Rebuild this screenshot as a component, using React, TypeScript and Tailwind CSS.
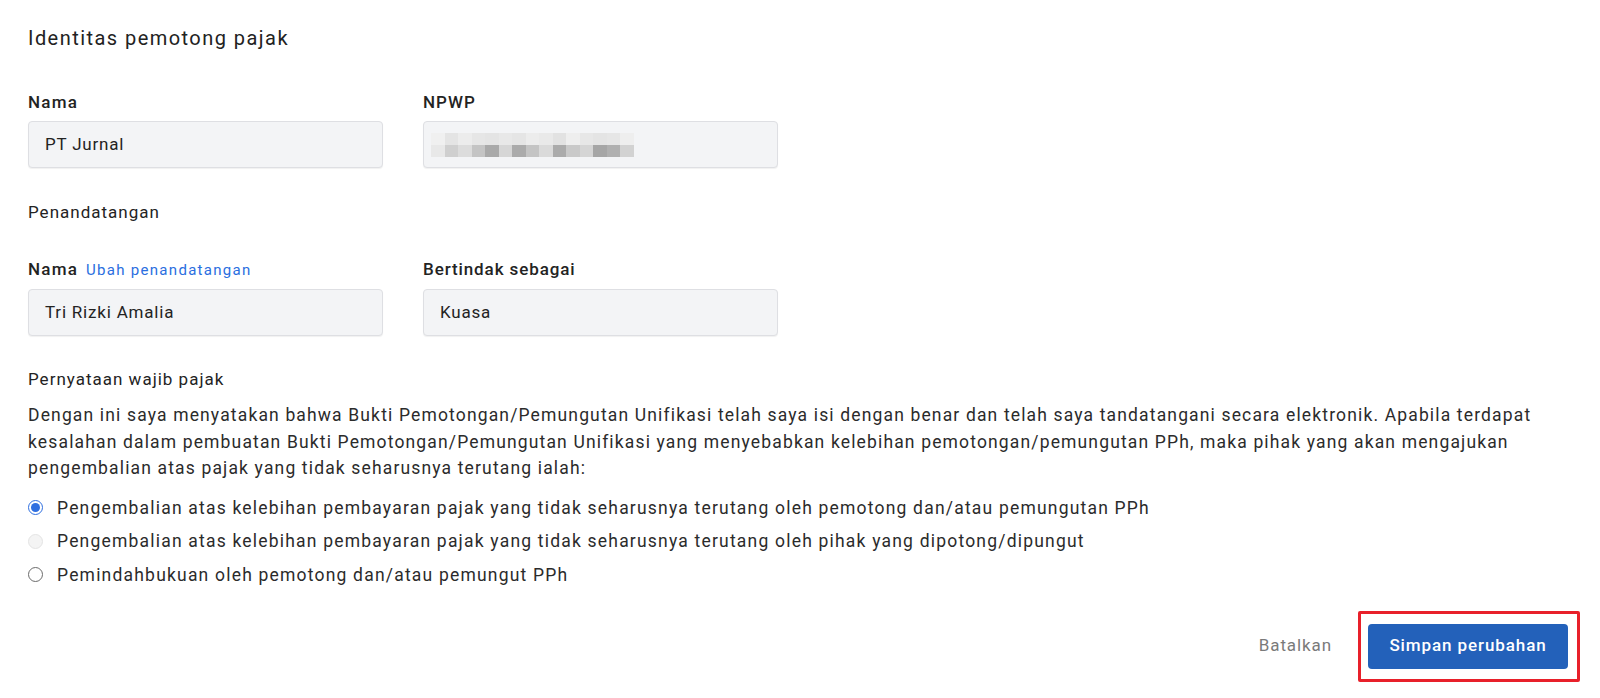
import React from "react";

function Radio({ state }: { state: "checked" | "disabled" | "off" }) {
  if (state === "checked")
    return (
      <span className="flex h-[15px] w-[15px] shrink-0 items-center justify-center rounded-full border-[1.5px] border-[#2f6fe0] bg-white">
        <span className="h-[9px] w-[9px] rounded-full bg-[#2f6fe0]" />
      </span>
    );
  if (state === "disabled")
    return <span className="h-[15px] w-[15px] shrink-0 rounded-full border border-[#e4e4e4] bg-[#f4f4f4]" />;
  return <span className="h-[15px] w-[15px] shrink-0 rounded-full border-[1.5px] border-[#6b6b6b] bg-white" />;
}

function Field({ children }: { children: React.ReactNode }) {
  return (
    <div className="flex h-[47px] w-[355px] items-center rounded-[4px] border border-[#dedfe3] bg-[#f3f4f6] px-[16px] text-[17px] tracking-[0.8px] text-[#232323] shadow-[0_1px_1px_rgba(0,0,0,0.06)]">
      {children}
    </div>
  );
}

function Blur() {
  const cells = [
    ["#f0f0f0", "#e8e8e8"],
    ["#e4e4e4", "#cfcfcf"],
    ["#ececec", "#dcdcdc"],
    ["#e6e6e6", "#c4c4c4"],
    ["#e4e4e4", "#a9a9a9"],
    ["#e8e8e8", "#d6d6d6"],
    ["#e5e5e5", "#ababab"],
    ["#ececec", "#c4c4c4"],
    ["#e9e9e9", "#dadada"],
    ["#e2e2e2", "#ababab"],
    ["#eeeeee", "#c9c9c9"],
    ["#e7e7e7", "#d5d5d5"],
    ["#e4e4e4", "#a6a6a6"],
    ["#e6e6e6", "#b0b0b0"],
    ["#eeeeee", "#d2d2d2"],
  ];
  return (
    <div className="-ml-[9px] flex">
      {cells.map((c, i) => (
        <div key={i} className="flex flex-col">
          <div className="h-[12px] w-[13.5px]" style={{ background: c[0] }} />
          <div className="h-[12px] w-[13.5px]" style={{ background: c[1] }} />
        </div>
      ))}
    </div>
  );
}

export default function App() {
  return (
    <div
      className="min-h-[698px] w-[1600px] bg-white text-[#232323]"
      style={{ fontFamily: "Roboto, 'Noto Sans', sans-serif" }}
    >
      <div className="px-[28px] pt-[26px]">
        <h1 className="text-[20px] font-normal leading-[24px] tracking-[1.45px] text-[#222]">Identitas pemotong pajak</h1>

        <div className="mt-[41px] flex gap-[40px]">
          <div className="flex flex-col">
            <div className="text-[17px] font-medium leading-[22px] tracking-[1.2px]">Nama</div>
            <div className="mt-[8px]">
              <Field>PT Jurnal</Field>
            </div>
          </div>
          <div className="flex flex-col">
            <div className="text-[17px] font-medium leading-[22px] tracking-[1px]">NPWP</div>
            <div className="mt-[8px]">
              <Field>
                <Blur />
              </Field>
            </div>
          </div>
        </div>

        <div className="mt-[33px] text-[17px] leading-[22px] tracking-[1px]">Penandatangan</div>

        <div className="mt-[35px] flex gap-[40px]">
          <div className="flex flex-col">
            <div className="flex h-[22px] items-baseline gap-[8px] leading-[22px]">
              <span className="text-[17px] font-medium tracking-[1.2px]">Nama</span>
              <span className="text-[15px] leading-[22px] tracking-[1.3px] text-[#2a6ee0]">Ubah penandatangan</span>
            </div>
            <div className="mt-[9px]">
              <Field>Tri Rizki Amalia</Field>
            </div>
          </div>
          <div className="flex flex-col">
            <div className="text-[17px] font-medium leading-[22px] tracking-[0.9px]">Bertindak sebagai</div>
            <div className="mt-[9px]">
              <Field>Kuasa</Field>
            </div>
          </div>
        </div>

        <div className="mt-[32px] text-[17px] leading-[22px] tracking-[1px]">Pernyataan wajib pajak</div>

        <p className="mt-[12px] max-w-[1552px] text-[17.5px] leading-[26.5px] tracking-[1.15px] text-[#2b2b2b]">
          Dengan ini saya menyatakan bahwa Bukti Pemotongan/Pemungutan Unifikasi telah saya isi dengan benar dan
          telah saya tandatangani secara elektronik. Apabila terdapat kesalahan dalam pembuatan Bukti
          Pemotongan/Pemungutan Unifikasi yang menyebabkan kelebihan pemotongan/pemungutan PPh, maka pihak yang akan
          mengajukan pengembalian atas pajak yang tidak seharusnya terutang ialah:
        </p>

        <div className="mt-[15px] flex flex-col gap-[11.5px] text-[17.5px] leading-[22px] tracking-[1.2px] text-[#2b2b2b]">
          <label className="flex items-center gap-[14px]">
            <Radio state="checked" />
            <span>Pengembalian atas kelebihan pembayaran pajak yang tidak seharusnya terutang oleh pemotong dan/atau pemungutan PPh</span>
          </label>
          <label className="flex items-center gap-[14px]">
            <Radio state="disabled" />
            <span>Pengembalian atas kelebihan pembayaran pajak yang tidak seharusnya terutang oleh pihak yang dipotong/dipungut</span>
          </label>
          <label className="flex items-center gap-[14px]">
            <Radio state="off" />
            <span>Pemindahbukuan oleh pemotong dan/atau pemungut PPh</span>
          </label>
        </div>
      </div>

      <div className="mt-[25px] flex items-center justify-end pr-[20px]">
        <button className="mr-[26px] text-[17px] tracking-[0.9px] text-[#7a7a7a]">Batalkan</button>
        <div className="rounded-[2px] border-[3px] border-[#e8202a] py-[10px] pl-[7px] pr-[9px]">
          <button className="h-[45px] w-[200px] rounded-[4px] bg-[#2361ba] text-[17px] font-medium tracking-[0.9px] text-white">
            Simpan perubahan
          </button>
        </div>
      </div>
    </div>
  );
}
